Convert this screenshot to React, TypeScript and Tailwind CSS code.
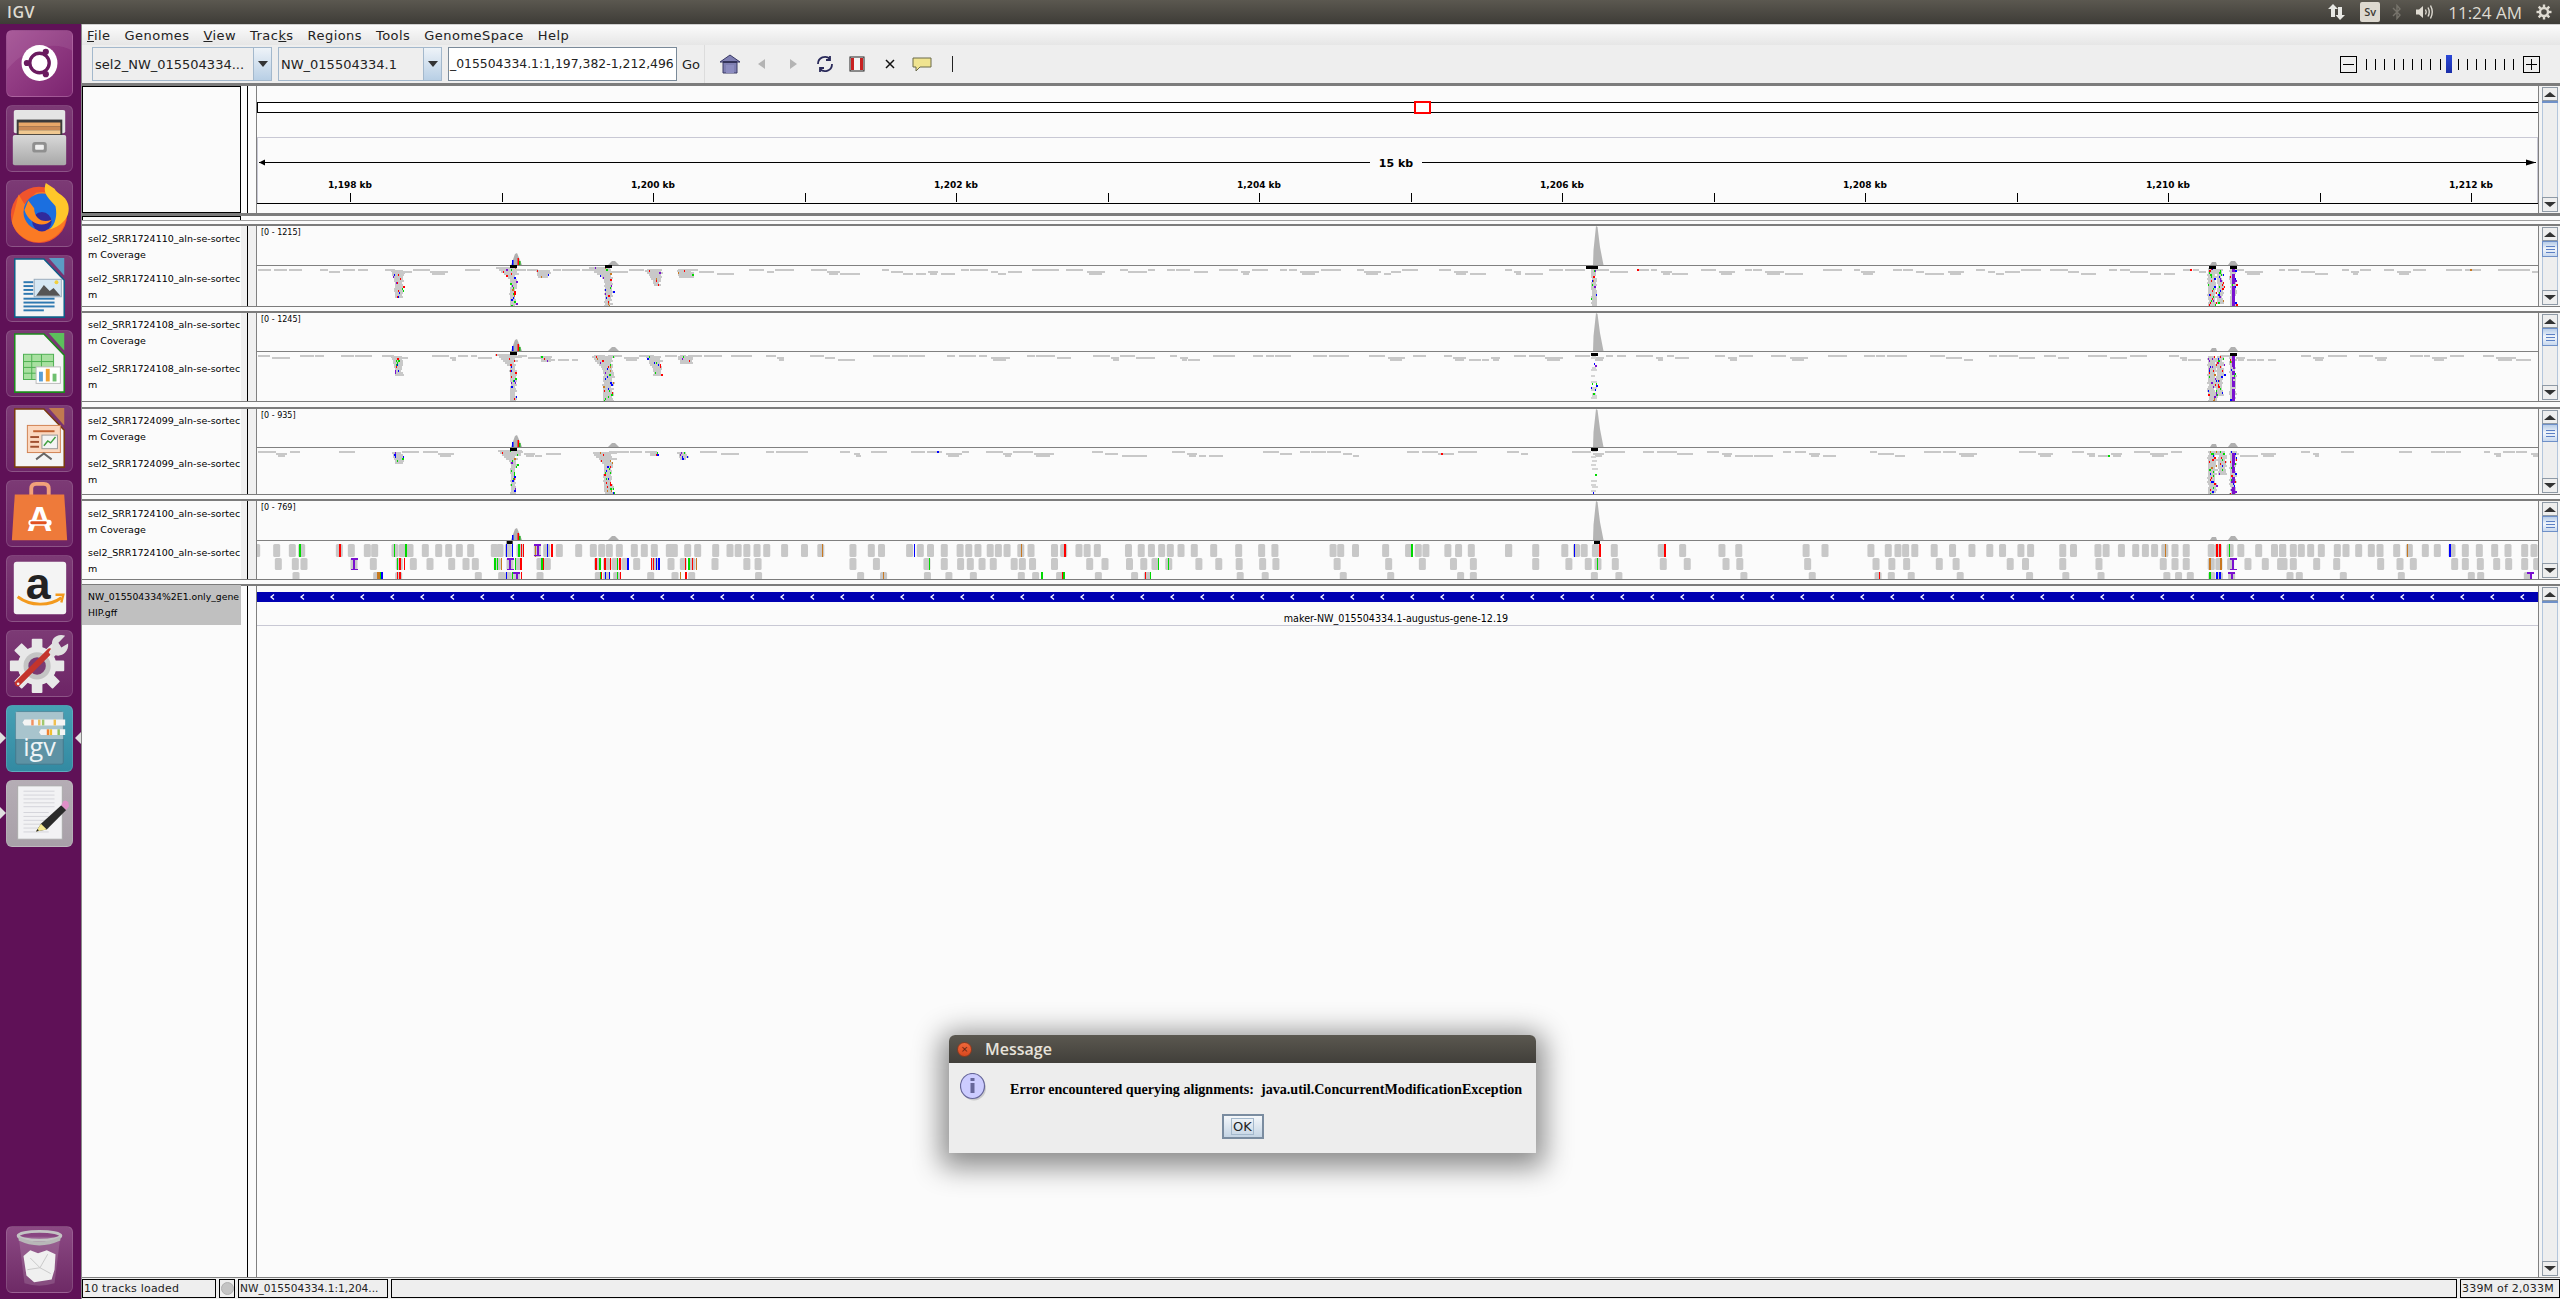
import React from "react";

function mk(seed: number) {
  let a = seed >>> 0;
  return () => {
    a = (a + 0x6d2b79f5) >>> 0;
    let t = a;
    t = Math.imul(t ^ (t >>> 15), t | 1);
    t ^= t + Math.imul(t ^ (t >>> 7), t | 61);
    return ((t ^ (t >>> 14)) >>> 0) / 4294967296;
  };
}
const GREY = "#c8c8c8";
const COLORS = ["#ff0000", "#0000ff", "#00d800", "#c87820", "#7a10d0", "#ff0000", "#0000ff", "#00d800"];

type R = { x: number; y: number; w: number; h: number; c: string };

function scatter(seed: number, y0: number, step: number): R[] {
  const r = mk(seed);
  const out: R[] = [];
  let x = 258;
  while (x < 2530) {
    const groupEnd = x + 10 + r() * 50;
    let row = 0;
    while (x < groupEnd) {
      const w = 6 + r() * 14;
      out.push({ x, y: y0 + row * 2, w, h: 2, c: GREY });
      if (row === 1 && r() < 0.5) out.push({ x: x + 2, y: y0 + 4, w: w * 0.7, h: 2, c: GREY });
      if (r() < 0.02) out.push({ x: x + r() * w, y: y0 + row * 2, w: 2, h: 2, c: COLORS[Math.floor(r() * 8)] });
      x += w + r() * 4;
      row = r() < 0.5 ? Math.min(row + 1, 2) : Math.max(row - 1, 0);
    }
    x += 4 + r() * step;
  }
  return out;
}

function pile(seed: number, cx: number, w: number, y0: number, y1: number, flare: number, opts: { dens?: number; purple?: boolean; sparse?: boolean; mark?: boolean } = {}): R[] {
  const r = mk(seed);
  const out: R[] = [];
  const dens = opts.dens ?? 0.7;
  for (let y = y0; y < y1; y += 2) {
    const t = Math.max(0, 1 - (y - y0) / 12);
    const ww = w * (0.8 + r() * 0.4) + flare * t * (0.6 + r() * 0.5);
    const left = cx - w / 2 - flare * t * 0.7 + (r() - 0.5) * 1.5;
    if (!opts.sparse || r() < 0.45) out.push({ x: left, y, w: ww, h: 2, c: opts.sparse ? "#d4d4d4" : GREY });
    if (r() < dens) {
      out.push({ x: left + r() * ww, y, w: r() < 0.7 ? 1 : 2, h: 2, c: COLORS[Math.floor(r() * 8)] });
      if (r() < 0.25) out.push({ x: left + r() * ww, y, w: 1, h: 2, c: COLORS[Math.floor(r() * 8)] });
    }
    if (opts.purple && r() < 0.85) out.push({ x: cx - 1, y, w: 2.5, h: 2, c: "#7a10d0" });
  }
  if (opts.mark !== false) out.push({ x: cx - 3.5, y: y0 - 2, w: 7, h: 3, c: "#000000" });
  return out;
}

function Rects({ items }: { items: R[] }) {
  return (
    <>
      {items.map((d, i) => (
        <rect key={i} x={d.x} y={d.y} width={d.w} height={d.h} fill={d.c} shapeRendering="crispEdges" />
      ))}
    </>
  );
}

function Peaks({ div, top }: { div: number; top: number }) {
  return (
    <g>
      <polygon points={`1593,${div} 1593.5,${div - 15} 1596,${top} 1597.5,${top + 1} 1600,${div - 18} 1603.5,${div}`} fill="#b4b4b4" />
      <polygon points={`511,${div} 515,${div - 11} 517,${div - 12} 520,${div - 5} 522,${div}`} fill="#b0b0b0" />
      <rect x="512" y={div - 5} width="1.5" height="5" fill="#0000ff" />
      <rect x="517.5" y={div - 7} width="1.5" height="7" fill="#ff0000" />
      <rect x="519" y={div - 4} width="1.5" height="4" fill="#00c000" />
      <polygon points={`608,${div} 612,${div - 4} 615,${div - 4} 619,${div}`} fill="#b0b0b0" />
      <polygon points={`2210,${div} 2212,${div - 3} 2216,${div - 3} 2217,${div}`} fill="#b0b0b0" />
      <polygon points={`2228,${div} 2231,${div - 4} 2235,${div - 4} 2238,${div}`} fill="#b0b0b0" />
    </g>
  );
}

const z10 = (X: number) => 240 + X / 3;
const z11 = (X: number) => 730 + X / 1.96;
const z9 = (X: number) => 1500 + X / 1.96;
const z12 = (X: number) => 2280 + X / 3;

const row1 = [
  ...[50, 110, 157, 185, 298, 334, 382, 404, 465, 487, 510, 556, 596, 626, 658, 692, 763, 780, 805, 840, 892, 920, 958, 1016, 1060, 1085, 1108, 1138, 1183, 1213, 1243, 1288, 1303, 1343, 1373, 1427, 1470].map(z10),
  ...[16, 33, 53, 72, 107, 146, 178, 241, 277, 297, 352, 373, 393, 420, 451, 468, 486, 510, 526, 543, 570, 590, 636, 654, 684, 700, 720, 781, 806, 826, 846, 863, 884, 910, 948, 997, 1042, 1068, 1182, 1197, 1226, 1285, 1330, 1349, 1364, 1407, 1428, 1453, 1526].map(z11),
  ...[17, 70, 127, 150, 165, 187, 224, 316, 358, 435, 468, 600, 637, 727, 761, 780, 795, 813, 851, 887, 925, 960, 985, 1021, 1040, 1103, 1124, 1172, 1188, 1218, 1246, 1265, 1283, 1303, 1323, 1345, 1394, 1408, 1431, 1452, 1487, 1518, 1534].map(z9),
  ...[8, 40, 64, 92, 124, 172, 198, 236, 274, 300, 350, 388, 436, 472, 516, 556, 598, 644, 684, 734, 762].map(z12),
];
const row2 = [
  ...[115, 166, 192, 342, 400, 478, 520, 570, 635, 678, 706, 772, 810, 835, 900, 922, 1073, 1100, 1125, 1155, 1190, 1245, 1293, 1330, 1356, 1425].map(z10),
  ...[33, 55, 241, 287, 386, 420, 452, 471, 494, 516, 557, 573, 593, 636, 705, 735, 783, 811, 833, 860, 919, 958, 998, 1044, 1070, 1190, 1291, 1357, 1418, 1457].map(z11),
  ...[70, 135, 173, 192, 226, 320, 367, 443, 470, 603, 737, 768, 797, 861, 894, 1000, 1030, 1103, 1174, 1300, 1323, 1345, 1394, 1409, 1432, 1466, 1500, 1530].map(z9),
  ...[12, 40, 110, 170, 302, 360, 400, 524, 556, 601, 650, 686, 734, 770].map(z12),
];
const row3 = [
  ...[168, 410, 476, 715, 785, 805, 830, 900, 1075, 1100, 1130, 1232, 1305, 1355].map(z10),
  ...[56, 256, 301, 387, 429, 477, 571, 599, 646, 722, 793, 818, 1000, 1049, 1202, 1295, 1432, 1457].map(z11),
  ...[185, 233, 478, 612, 741, 767, 806, 902, 1038, 1109, 1178, 1307, 1330, 1353, 1395, 1410, 1434].map(z9),
  ...[30, 58, 190, 364, 574, 602, 742].map(z12),
];
const RD = "#ff0000", BL = "#0000ff", GN = "#00d800", OR = "#c87820";
const s1: [number, string][] = [
  [z10(178), GN], [z10(298), RD], [z10(461), GN], [z10(496), GN], [z10(798), BL], [z10(815), BL], [z10(835), GN], [z10(842), RD], [z10(848), RD], [z10(885), OR], [z10(920), BL], [z10(934), RD],
  [z11(180), OR], [z11(360), BL], [z11(570), OR], [z11(655), RD], [z11(1335), GN],
  [z9(145), BL], [z9(195), RD], [z9(322), RD], [z9(1303), OR], [z9(1404), RD], [z9(1410), RD], [z9(1428), GN],
  [z12(381), OR], [z12(508), BL],
];
const s2: [number, string][] = [
  [z10(470), GN], [z10(478), RD], [z10(492), RD], [z10(763), GN], [z10(770), GN], [z10(783), OR], [z10(825), GN], [z10(840), RD], [z10(843), RD], [z10(904), GN], [z10(908), RD], [z10(1066), RD], [z10(1078), GN], [z10(1093), RD], [z10(1110), RD], [z10(1130), GN], [z10(1138), RD], [z10(1162), BL], [z10(1233), RD], [z10(1238), RD], [z10(1248), BL], [z10(1255), BL], [z10(1335), RD], [z10(1345), GN], [z10(1355), RD], [z10(1368), OR],
  [z11(390), GN], [z11(838), GN], [z11(858), GN],
  [z9(190), GN], [z9(1390), OR], [z9(1412), OR],
];
const s3: [number, string][] = [
  [z10(410), OR], [z10(415), OR], [z10(420), GN], [z10(424), BL], [z10(470), RD], [z10(478), RD], [z10(797), BL], [z10(815), GN], [z10(842), RD], [z10(1080), GN], [z10(1083), RD], [z10(1095), BL], [z10(1106), BL], [z10(1130), GN], [z10(1140), RD], [z10(1320), OR], [z10(1336), RD],
  [z11(300), OR], [z11(610), GN], [z11(650), RD], [z11(653), GN], [z11(813), RD], [z11(823), GN],
  [z9(742), RD], [z9(1390), GN], [z9(1404), BL], [z9(1410), BL],
];

function Blocks({ xs, y, h, stripes }: { xs: number[]; y: number; h: number; stripes: [number, string][] }) {
  return (
    <g>
      {xs.map((x, i) => (
        <rect key={i} x={x - 3.5} y={y} width={7} height={h} rx={1.5} fill={GREY} />
      ))}
      {stripes.map(([x, c], i) => (
        <rect key={i} x={x} y={y} width={1.4} height={h} fill={c} shapeRendering="crispEdges" />
      ))}
    </g>
  );
}
function PurpleI({ x, y, h, top }: { x: number; y: number; h: number; top?: boolean }) {
  return (
    <g fill="#7a10d0" shapeRendering="crispEdges">
      <rect x={x - 1} y={y} width={2} height={h} />
      <rect x={x - 3.5} y={y} width={7} height={1.5} />
      {!top && <rect x={x - 3.5} y={y + h - 1.5} width={7} height={1.5} />}
    </g>
  );
}

const T1 = [
  ...scatter(11, 269, 16),
  ...pile(1, 399, 8, 270, 298, 6, { mark: false }),
  ...pile(2, 513, 6, 267, 306, 20, { dens: 0.85 }),
  ...pile(3, 608, 7, 267, 306, 22, { dens: 0.8 }),
  ...pile(4, 657, 6, 270, 285, 12, { mark: false }),
  ...pile(5, 544, 10, 270, 278, 4, { mark: false }),
  ...pile(6, 686, 10, 270, 278, 6, { mark: false }),
  ...pile(7, 1594, 5, 268, 306, 0, { dens: 0.4 }),
  { x: 1586, y: 266, w: 6, h: 3, c: "#000" },
  ...pile(8, 2212, 8, 268, 306, 0, { dens: 0.9, mark: true }),
  ...pile(9, 2220, 6, 270, 304, 0, { dens: 0.9, mark: false }),
  ...pile(10, 2233, 6, 268, 306, 0, { dens: 0.7, purple: true }),
];
const T2 = [
  ...scatter(21, 355, 20),
  ...pile(12, 399, 8, 356, 376, 6, { mark: false }),
  ...pile(13, 513, 6, 354, 402, 20, { dens: 0.7 }),
  ...pile(14, 608, 10, 356, 402, 16, { dens: 0.85, mark: false }),
  ...pile(15, 657, 8, 356, 376, 10, { mark: false }),
  ...pile(16, 687, 10, 356, 363, 6, { mark: false }),
  ...pile(17, 547, 8, 356, 362, 4, { mark: false }),
  ...pile(18, 1594, 5, 355, 400, 0, { dens: 0.3, sparse: true }),
  ...pile(19, 2212, 8, 356, 402, 0, { dens: 0.9, mark: false }),
  ...pile(20, 2220, 7, 356, 396, 0, { dens: 0.9, mark: false }),
  ...pile(22, 2233, 6, 355, 402, 0, { dens: 0.6, purple: true }),
];
const T3 = [
  ...scatter(31, 451, 45),
  ...pile(23, 399, 7, 452, 463, 5, { mark: false }),
  ...pile(24, 513, 5, 450, 495, 18, { dens: 0.75 }),
  ...pile(25, 608, 8, 452, 495, 16, { dens: 0.8, mark: false }),
  ...pile(26, 655, 4, 452, 456, 4, { mark: false }),
  ...pile(27, 684, 6, 452, 460, 4, { mark: false }),
  ...pile(33, 1594, 5, 450, 495, 0, { dens: 0.2, sparse: true }),
  ...pile(28, 2212, 8, 451, 495, 0, { dens: 0.9, mark: false }),
  ...pile(29, 2222, 8, 451, 475, 0, { dens: 0.8, mark: false }),
  ...pile(30, 2233, 6, 451, 495, 0, { dens: 0.9, purple: true, mark: false }),
];

const Name = ({ a, b }: { a: string; b: string }) => (
  <div className="flex-1 min-w-0 flex flex-col justify-center">
    <div className="whitespace-nowrap leading-[16px]">{a}</div>
    <div className="whitespace-nowrap leading-[16px]">{b}</div>
  </div>
);

function Scroll({ thumb, lines = true }: { thumb: number; lines?: boolean }) {
  return (
    <div className="w-[22px] shrink-0 border-l border-[#808080] bg-[#f4f4f4] flex flex-col pl-[3px] pr-[2px] pt-[1px] pb-[1px]">
      <div className="h-[14px] shrink-0 bg-[#eeeeee] border border-[#8f9aa6] flex items-center justify-center">
        <div className="w-0 h-0 border-x-[6px] border-x-transparent border-b-[5px] border-b-[#333333]" />
      </div>
      <div className="shrink-0 bg-gradient-to-b from-[#b8cde8] via-[#f2f6fb] to-[#c8d8ee] border border-[#6f90c8] flex flex-col items-center justify-center gap-[2px]" style={{ height: thumb }}>
        {lines && (
          <>
            <div className="w-[9px] h-px bg-[#5c80c4]" />
            <div className="w-[9px] h-px bg-[#5c80c4]" />
            <div className="w-[9px] h-px bg-[#5c80c4]" />
          </>
        )}
      </div>
      <div className="flex-1 bg-[#eeeeee] border-x border-[#b4c6dc]" />
      <div className="h-[15px] shrink-0 bg-[#eeeeee] border border-[#8f9aa6] flex items-center justify-center">
        <div className="w-0 h-0 border-x-[6px] border-x-transparent border-t-[5px] border-t-[#333333]" />
      </div>
    </div>
  );
}

function Track({ n, range, top, h, div, items, extra, mt }: { n: string; range: string; top: number; h: number; div: number; items?: R[]; extra?: React.ReactNode; mt: string }) {
  return (
    <div className={`flex shrink-0 border-t-2 border-b border-[#7c7c7c] bg-[#fbfbfb] ${mt}`} style={{ height: h }}>
      <div className="w-[159px] shrink-0 pl-[6px] text-[9.5px] text-black flex flex-col bg-[#fbfbfb]">
        <div className="flex" style={{ height: div - top }}>
          <Name a={`sel2_SRR${n}_aln-se-sortec`} b="m Coverage" />
        </div>
        <div className="flex flex-1 min-h-0">
          <Name a={`sel2_SRR${n}_aln-se-sortec`} b="m" />
        </div>
      </div>
      <div className="w-[6px] shrink-0 bg-[#f0f0f0]" />
      <div className="w-px shrink-0 bg-black" />
      <div className="w-[8px] shrink-0 bg-[#f0f0f0]" />
      <div className="w-px shrink-0 bg-[#808080]" />
      <div className="relative w-[2281px] shrink-0">
        <svg className="block" width={2281} height={h - 3} viewBox={`257 ${top + 2} 2281 ${h - 3}`}>
          <Peaks div={div} top={top + 2} />
          <rect x="257" y={div} width="2281" height="1" fill="#808080" />
          {items && <Rects items={items} />}
          {extra}
        </svg>
        <div className="absolute left-[4px] top-[2px] text-[8px] leading-[10px] text-black font-['DejaVu_Sans']">{range}</div>
      </div>
      <Scroll thumb={h > 85 ? 18 : 16} />
    </div>
  );
}

const T4extra = (
  <g>
    <Blocks xs={row1} y={544} h={13} stripes={s1} />
    <Blocks xs={row2} y={558} h={12} stripes={s2} />
    <Blocks xs={row3} y={572} h={8} stripes={s3} />
    <PurpleI x={z10(342)} y={558} h={12} />
    <PurpleI x={z10(810)} y={558} h={12} />
    <PurpleI x={z9(1437)} y={558} h={12} />
    <PurpleI x={z10(893)} y={544} h={12} />
    <PurpleI x={z10(830)} y={572} h={8} top />
    <PurpleI x={z9(1434)} y={572} h={8} top />
    <PurpleI x={z12(752)} y={572} h={8} top />
    <rect x={z10(800)} y={541} width={6} height={3} fill="#000" />
    <rect x={1594} y={541} width={6} height={3} fill="#000" />
  </g>
);

function Ruler() {
  const ticks = Array.from({ length: 15 }, (_, i) => 350 + i * 151.5);
  const labels = ["1,198 kb", "1,200 kb", "1,202 kb", "1,204 kb", "1,206 kb", "1,208 kb", "1,210 kb", "1,212 kb"];
  return (
    <svg className="block" width={2281} height={127} viewBox="257 86 2281 127">
      <rect x="257" y="86" width="2281" height="127" fill="#fbfbfb" />
      <rect x="257.5" y="102.5" width="2281" height="10" fill="#ffffff" stroke="#000" />
      <rect x="1415" y="102" width="15" height="11" fill="none" stroke="#ff0000" strokeWidth="2" />
      <rect x="257.5" y="137.5" width="2280" height="66" fill="none" stroke="#c8c8d4" />
      <rect x="259" y="162" width="2277" height="1" fill="#000" />
      <polygon points="259,162.5 265,159.5 265,165.5" fill="#000" />
      <polygon points="2536,162.5 2526,159.5 2526,165.5" fill="#000" />
      <rect x="1370" y="155" width="52" height="15" fill="#fbfbfb" />
      <text x="1396" y="167" textAnchor="middle" fontFamily="'DejaVu Sans', sans-serif" fontWeight="700" fontSize="11" fill="#000">15 kb</text>
      {ticks.map((x, i) => (
        <rect key={i} x={Math.round(x)} y="193" width="1" height="9" fill="#000" />
      ))}
      {labels.map((l, i) => (
        <text key={i} x={350 + i * 303} y="188" textAnchor="middle" fontFamily="'DejaVu Sans', sans-serif" fontWeight="700" fontSize="9" fill="#000">{l}</text>
      ))}
      <rect x="257" y="203" width="2281" height="1" fill="#000" />
    </svg>
  );
}

function Tile({ children, cls }: { children: React.ReactNode; cls?: string }) {
  return (
    <div className={`w-[67px] h-[67px] shrink-0 rounded-[6px] border border-[#ffffff22] flex items-center justify-center overflow-hidden ${cls ?? "bg-gradient-to-b from-[#7c3a75] to-[#6d2466]"}`}>
      {children}
    </div>
  );
}

const Svg = ({ children }: { children: React.ReactNode }) => (
  <svg width="67" height="67" viewBox="0 0 67 67">{children}</svg>
);

function DocIcon({ edge, corner, children }: { edge: string; corner: string; children: React.ReactNode }) {
  return (
    <Svg>
      <path d="M8 3 H38 L59 25 V63 H8 Z" fill="#f4f4f4" stroke={edge} strokeWidth="1.6" />
      <path d="M43 2 H59 V20 Z" fill={corner} />
      {children}
    </Svg>
  );
}

function Launcher() {
  return (
    <div className="w-[82px] shrink-0 h-full bg-[#5f1157] border-r border-[#8a8a8a] flex flex-col items-center pt-[6px] pb-[6px] gap-[8px] pr-[2px] relative">
      <Tile cls="bg-gradient-to-br from-[#a24d92] to-[#7c2470]">
        <Svg>
          <path d="M0 40 C 20 15, 50 10, 67 20 V 0 H0 Z" fill="#ffffff14" />
          <circle cx="33.5" cy="33" r="18.5" fill="#fff" />
          <circle cx="33.5" cy="33" r="10" fill="none" stroke="#6a1a5f" strokeWidth="3.5" />
          <circle cx="40" cy="21.5" r="3.2" fill="#6a1a5f" />
          <circle cx="40" cy="44.5" r="3.2" fill="#6a1a5f" />
          <circle cx="20.5" cy="33" r="3.2" fill="#6a1a5f" />
        </Svg>
      </Tile>
      <Tile>
        <Svg>
          <rect x="7" y="4" width="53" height="24" rx="2" fill="#e4e4e4" />
          <rect x="10" y="14" width="47" height="16" fill="#3a3a3a" />
          <rect x="12" y="17" width="43" height="4" fill="#e8a868" />
          <rect x="12" y="21" width="43" height="4" fill="#c98a55" />
          <rect x="12" y="25" width="43" height="4" fill="#f0c890" />
          <rect x="6" y="30" width="55" height="31" rx="2" fill="url(#cab)" />
          <defs>
            <linearGradient id="cab" x1="0" y1="0" x2="0" y2="1">
              <stop offset="0" stopColor="#d8d8d8" />
              <stop offset="1" stopColor="#a8a8a8" />
            </linearGradient>
          </defs>
          <rect x="26" y="37" width="15" height="11" rx="3" fill="#8f8f8f" />
          <rect x="29" y="40" width="9" height="5" rx="1" fill="#f0f0f0" />
        </Svg>
      </Tile>
      <Tile>
        <Svg>
          <circle cx="33" cy="35" r="29" fill="#f0542c" />
          <path d="M12 14 L18 24 L30 12 C 50 8 60 22 61 34 C 62 50 48 63 32 63 C 20 63 8 54 5 42 Z" fill="#fb7a24" />
          <circle cx="36" cy="32" r="19" fill="#1b6fe0" />
          <circle cx="36" cy="42" r="10" fill="#302a9c" />
          <path d="M18 30 C 22 44 38 50 46 40 C 36 44 28 38 28 28 L 22 20 Z" fill="#ff8a20" />
          <path d="M40 2 C 36 14 44 18 50 26 C 52 36 50 44 44 50 C 58 46 66 36 63 24 C 60 14 52 14 49 8 Z" fill="#ffc72a" />
        </Svg>
      </Tile>
      <Tile>
        <DocIcon edge="#0f5e88" corner="#5b9cc4">
          <rect x="28" y="24" width="28" height="18" fill="#d6e8f4" stroke="#9ab" />
          <path d="M30 41 L38 30 L44 36 L48 33 L55 41 Z" fill="#555" />
          <circle cx="51" cy="27" r="2" fill="#f0d040" />
          {[26, 30, 34, 38].map((y) => <rect key={y} x="17" y={y} width="10" height="2" fill="#2e78b0" />)}
          {[43, 47, 51].map((y) => <rect key={y} x="17" y={y} width="32" height="2" fill="#2e78b0" />)}
          <rect x="17" y="55" width="21" height="2" fill="#2e78b0" />
        </DocIcon>
      </Tile>
      <Tile>
        <DocIcon edge="#1c8a1c" corner="#5cc05c">
          <rect x="17" y="24" width="31" height="26" fill="#a8e0a0" stroke="#4caf50" />
          {[31, 37, 43].map((y) => <rect key={y} x="17" y={y} width="31" height="1" fill="#4caf50" />)}
          {[25, 35].map((x) => <rect key={x} x={x} y="24" width="1" height="26" fill="#4caf50" />)}
          <rect x="30" y="37" width="25" height="17" fill="#fff" stroke="#bbb" />
          <rect x="33" y="42" width="4" height="10" fill="#5a9fd4" />
          <rect x="40" y="39" width="4" height="13" fill="#f0a030" />
          <rect x="47" y="44" width="4" height="8" fill="#70c070" />
        </DocIcon>
      </Tile>
      <Tile>
        <DocIcon edge="#7a3a10" corner="#c07a50">
          <rect x="21" y="20" width="34" height="28" fill="#fbd8c0" stroke="#d08050" />
          <rect x="27" y="25" width="22" height="2" fill="#c06030" />
          {[31, 36, 41].map((y) => <rect key={y} x="24" y={y} width="9" height="2" fill="#a05030" />)}
          <rect x="36" y="30" width="16" height="14" fill="#f4f4f4" stroke="#999" />
          <path d="M38 41 L42 36 L45 38 L50 32" stroke="#40a040" strokeWidth="1.5" fill="none" />
          <path d="M30 55 L38 49 L46 55" stroke="#666" strokeWidth="2" fill="none" />
        </DocIcon>
      </Tile>
      <Tile>
        <Svg>
          <path d="M25 20 V8 Q25 3 30 3 H38 Q43 3 43 8 V20" fill="none" stroke="#f2a27a" strokeWidth="4" />
          <path d="M8 14 H59 L62 61 H5 Z" fill="#ee7a3a" />
          <text x="33.5" y="52" textAnchor="middle" fontFamily="'Liberation Sans', sans-serif" fontWeight="700" fontSize="36" fill="#fff">A</text>
          <rect x="22" y="40" width="24" height="6" rx="3" fill="#fff" />
          <rect x="24" y="41.5" width="17" height="3" rx="1.5" fill="#e05020" />
        </Svg>
      </Tile>
      <Tile>
        <Svg>
          <rect x="7" y="6" width="54" height="54" rx="3" fill="#f4f4f4" />
          <text x="32" y="44" textAnchor="middle" fontFamily="'Liberation Sans', sans-serif" fontWeight="700" fontSize="46" fill="#222">a</text>
          <path d="M11 42 C 24 52 44 52 56 43" fill="none" stroke="#f39a1e" strokeWidth="3" />
          <path d="M50 40 L58 40 L56 48" fill="none" stroke="#f39a1e" strokeWidth="2.5" />
        </Svg>
      </Tile>
      <Tile>
        <Svg>
          <g fill="#e8e8e8">
            <circle cx="31" cy="36" r="20" />
            {[0, 45, 90, 135, 180, 225, 270, 315].map((a) => (
              <rect key={a} x="25.5" y="8" width="11" height="11" rx="1" transform={`rotate(${a} 31 36)`} />
            ))}
          </g>
          <circle cx="31" cy="36" r="14" fill="#c4c4c4" />
          <circle cx="31" cy="36" r="9" fill="#7a3a72" />
          <path d="M11 54 L44 21" stroke="#c4342c" strokeWidth="6" strokeLinecap="round" />
          <path d="M43 22 L47 16 C 44 8 52 2 60 5 L53 12 L56 17 L63 13 C 64 22 56 27 50 25 L47 28 Z" fill="#e0e0e0" />
          <circle cx="11.5" cy="54.5" r="1.4" fill="#eee" />
        </Svg>
      </Tile>
      <div className="relative">
        <Tile cls="bg-gradient-to-b from-[#46a0b4] to-[#338aa2]">
          <Svg>
            <rect x="9" y="6" width="49" height="54" rx="2" fill="#5d92a4" stroke="#44798c" />
            <rect x="9" y="6" width="49" height="28" fill="#dbe6ea" opacity="0.6" />
            <path d="M18 14 H60 V20 H18 L16 17 Z" fill="#f4f4f4" />
            {[[25, "#f09060"], [32, "#e8c060"], [36, "#a0c870"], [48, "#f0c050"]].map(([x, c]) => (
              <rect key={x as number} x={x as number} y="14" width="2.5" height="6" fill={c as string} />
            ))}
            <path d="M35 24 H60 V30 H35 L33 27 Z" fill="#f4f4f4" />
            {[[41, "#f08030"], [44, "#f0c030"], [52, "#90c060"]].map(([x, c]) => (
              <rect key={x as number} x={x as number} y="24" width="2.5" height="6" fill={c as string} />
            ))}
            <text x="33.5" y="52" textAnchor="middle" fontFamily="'Open Sans', sans-serif" fontSize="26" fill="#eef4f6">igv</text>
          </Svg>
        </Tile>
        <div className="absolute left-[-6px] top-[27px] w-0 h-0 border-y-[6px] border-y-transparent border-l-[6px] border-l-[#e0e0e0]" />
        <div className="absolute right-[-8px] top-[27px] w-0 h-0 border-y-[6px] border-y-transparent border-r-[6px] border-r-[#e0e0e0]" />
      </div>
      <div className="relative">
        <Tile cls="bg-gradient-to-b from-[#b5adb5] to-[#a8a0a8]">
          <Svg>
            <rect x="11" y="5" width="46" height="55" fill="#f2f2f4" stroke="#aaa" />
            {[10, 14, 18, 22, 26, 32, 36, 40, 44, 48, 52].map((y) => (
              <rect key={y} x="17" y={y} width={y % 4 ? 32 : 26} height="1" fill="#d4d4da" />
            ))}
            <path d="M30 52 L35 44 L56 25 L61 30 L41 50 Z" fill="#2a2a2a" />
            <path d="M56 25 L58 21 Q61 19 63 22 L64 26 L61 30 Z" fill="#e090c8" />
            <path d="M30 52 L35 44 L41 50 Z" fill="#f4e890" />
            <path d="M30 52 L31.5 49.5 L33 51 Z" fill="#222" />
          </Svg>
        </Tile>
        <div className="absolute left-[-6px] top-[27px] w-0 h-0 border-y-[6px] border-y-transparent border-l-[6px] border-l-[#e0e0e0]" />
      </div>
      <div className="mt-auto">
        <Tile cls="bg-gradient-to-b from-[#8c4a84] to-[#6e2a66]">
          <Svg>
            <path d="M12 10 L18 58 Q33 63 49 58 L55 10 Z" fill="#ffffff26" />
            <ellipse cx="33.5" cy="9" rx="22" ry="4.5" fill="none" stroke="#c4c4c4" strokeWidth="3" />
            <path d="M12 10 Q33 20 55 10 L55 14 Q33 24 12 14 Z" fill="#b8b8b8" />
            <path d="M17 30 L24 24 L32 27 L41 24 L50 28 L49 44 L46 54 L28 57 L20 50 Z" fill="#f0f0f0" />
            <path d="M24 32 L34 42 M42 28 L34 42 M21 44 L34 42 M45 48 L34 42" stroke="#c8c8c8" strokeWidth="1" />
          </Svg>
        </Tile>
      </div>
    </div>
  );
}

function TopBar() {
  return (
    <div className="h-6 shrink-0 bg-gradient-to-b from-[#5b5850] to-[#3e3c37] flex items-center pl-[7px] pr-[8px] text-[#dfdbd2]">
      <span className="font-['Open_Sans'] font-semibold text-[16px] leading-none tracking-[0.5px]">IGV</span>
      <div className="ml-auto flex items-center">
        <svg width="18" height="18" viewBox="0 0 18 18" className="mr-[14px]" fill="#e8e8e4">
          <path d="M5 1 L10 6 H7 V14 H3 V6 H0 Z" />
          <path d="M12 17 L7.5 12 H10 V4 H14 V12 H17 Z" />
        </svg>
        <div className="w-[20px] h-[20px] rounded-[2px] bg-[#ddd9d0] text-[#3c3a35] text-[11px] font-['Open_Sans'] font-semibold flex items-center justify-center mr-[12px]">Sv</div>
        <svg width="10" height="16" viewBox="0 0 10 16" className="mr-[13px]" fill="none" stroke="#77746c" strokeWidth="1.4">
          <path d="M1 4 L8 11 L5 14.5 V1.5 L8 5 L1 12" />
        </svg>
        <svg width="20" height="16" viewBox="0 0 20 16" className="mr-[13px]" fill="none" stroke="#dfdbd2" strokeWidth="1.4">
          <path d="M1 5.5 H4 L8 2 V14 L4 10.5 H1 Z" fill="#dfdbd2" stroke="none" />
          <path d="M10.5 5.5 Q12 8 10.5 10.5" />
          <path d="M13 3.5 Q15.5 8 13 12.5" />
          <path d="M15.5 1.5 Q19 8 15.5 14.5" />
        </svg>
        <span className="font-['Open_Sans'] text-[17px] leading-none mr-[14px]">11:24 AM</span>
        <svg width="16" height="16" viewBox="0 0 16 16" fill="none" stroke="#dfdbd2">
          <circle cx="8" cy="8" r="4" strokeWidth="2.4" />
          {[0, 45, 90, 135, 180, 225, 270, 315].map((a) => (
            <rect key={a} x="6.8" y="0.5" width="2.4" height="2.8" fill="#dfdbd2" stroke="none" transform={`rotate(${a} 8 8)`} />
          ))}
        </svg>
      </div>
    </div>
  );
}

function MenuBar() {
  return (
    <div className="h-[21px] shrink-0 bg-gradient-to-b from-[#fbfbfb] to-[#e6e6e6] border-t border-[#cfcfcf] flex items-center pl-[5px] gap-[14px] text-[13px] text-[#222222] leading-none tracking-[0.45px]">
      <span><u>F</u>ile</span>
      <span>Genomes</span>
      <span><u>V</u>iew</span>
      <span>Trac<u>k</u>s</span>
      <span>Regions</span>
      <span>Tools</span>
      <span>GenomeSpace</span>
      <span>Help</span>
    </div>
  );
}

function Combo({ w, text }: { w: string; text: string }) {
  return (
    <div className={`${w} h-[34px] shrink-0 flex border border-[#a3b8cc]`}>
      <div className="flex-1 bg-[#eeeeee] flex items-center pl-[2px] whitespace-nowrap">{text}</div>
      <div className="w-[18px] shrink-0 border-l border-[#a3b8cc] bg-gradient-to-b from-[#eef3f8] to-[#b8cfe5] flex items-center justify-center">
        <div className="w-0 h-0 border-x-[5px] border-x-transparent border-t-[6px] border-t-[#333333]" />
      </div>
    </div>
  );
}

function Toolbar() {
  return (
    <div className="h-[38px] shrink-0 bg-[#eeeeee] flex items-center pl-[10px] text-[13px] text-[#222222] leading-none">
      <Combo w="w-[180px]" text="sel2_NW_015504334..." />
      <div className="w-[6px] shrink-0" />
      <Combo w="w-[164px]" text="NW_015504334.1" />
      <div className="w-[6px] shrink-0" />
      <div className="w-[229px] h-[34px] shrink-0 bg-white border border-[#7a8a99] flex items-center pl-[1px] whitespace-nowrap text-[12.4px]">_015504334.1:1,197,382-1,212,496</div>
      <span className="ml-[5px] w-[20px]">Go</span>
      <div className="w-px h-[38px] bg-[#dcdcdc] ml-[2px]" />
      <svg width="22" height="20" viewBox="0 0 22 20" className="ml-[14px]">
        <path d="M11 1 L21 8 H18 V19 H4 V8 H1 Z" fill="#7f7fb2" stroke="#3a3a66" />
        <rect x="4" y="7" width="14" height="2" fill="#33335a" />
        <rect x="7" y="11" width="8" height="8" fill="#8c8cc0" />
      </svg>
      <svg width="10" height="12" viewBox="0 0 10 12" className="ml-[15px]"><path d="M9 1 L2 6 L9 11 Z" fill="#b4b4b4" /></svg>
      <svg width="10" height="12" viewBox="0 0 10 12" className="ml-[23px]"><path d="M1 1 L8 6 L1 11 Z" fill="#b4b4b4" /></svg>
      <svg width="20" height="18" viewBox="0 0 20 18" className="ml-[16px]" fill="none" stroke="#2a2a5a" strokeWidth="1.8">
        <path d="M3 9 A7 7 0 0 1 15 4" />
        <path d="M17 9 A7 7 0 0 1 5 14" />
        <path d="M15 1 V5 H11" />
        <path d="M5 17 V13 H9" />
      </svg>
      <svg width="16" height="16" viewBox="0 0 16 16" className="ml-[14px]">
        <rect x="1" y="1" width="14" height="14" fill="#f4f4f4" stroke="#222" />
        <rect x="2" y="2" width="3" height="12" fill="#c82020" />
        <rect x="11" y="2" width="3" height="12" fill="#c82020" />
      </svg>
      <svg width="14" height="14" viewBox="0 0 14 14" className="ml-[18px]" stroke="#111" strokeWidth="1.5" fill="none">
        <path d="M3 3 L11 11 M11 3 L3 11" />
      </svg>
      <svg width="20" height="16" viewBox="0 0 20 16" className="ml-[15px]">
        <path d="M1 2 H19 V11 H8 L4 15 V11 H1 Z" fill="#f0e490" stroke="#6a6a4a" />
      </svg>
      <div className="ml-[20px] w-px h-[16px] bg-[#222222]" />
      <div className="ml-auto flex items-center mr-[20px]">
        <div className="w-[17px] h-[17px] border border-black bg-[#eeeeee] flex items-center justify-center"><div className="w-[11px] h-px bg-black" /></div>
        <div className="ml-[9px] flex items-center gap-[8.2px]">
          {Array.from({ length: 17 }, (_, i) =>
            i === 9 ? (
              <div key={i} className="w-[6px] h-[18px] -mx-[2.5px] bg-gradient-to-b from-[#2a48d8] to-[#1a2ea8]" />
            ) : (
              <div key={i} className="w-px h-[11px] bg-black" />
            )
          )}
        </div>
        <div className="ml-[9px] w-[17px] h-[17px] border border-black bg-[#eeeeee] relative">
          <div className="absolute left-[2px] top-[7px] w-[11px] h-px bg-black" />
          <div className="absolute left-[7px] top-[2px] w-px h-[11px] bg-black" />
        </div>
      </div>
    </div>
  );
}

function Dialog() {
  return (
    <div className="absolute left-[949px] top-[1035px] w-[587px] h-[118px] flex flex-col rounded-t-[6px] bg-[#ededed] shadow-[0_6px_28px_8px_rgba(0,0,0,0.45)]">
      <div className="h-[28px] shrink-0 rounded-t-[6px] bg-gradient-to-b from-[#5b5850] to-[#413f3a] flex items-center pl-[8px]">
        <div className="w-[15px] h-[15px] rounded-full bg-gradient-to-b from-[#f0683a] to-[#d8481e] border border-[#8a3a20] flex items-center justify-center text-[9px] leading-none text-[#5a2010]">×</div>
        <span className="ml-[13px] font-['Open_Sans'] font-semibold text-[16px] leading-none text-[#e6e2da]">Message</span>
      </div>
      <div className="flex items-start pl-[11px] pt-[10px]">
        <svg width="27" height="28" viewBox="0 0 27 28" className="shrink-0">
          <ellipse cx="14" cy="15" rx="12" ry="12.5" fill="#999" opacity="0.4" />
          <ellipse cx="12.5" cy="13" rx="12" ry="12.5" fill="#ccccff" stroke="#666699" strokeWidth="1.2" />
          <rect x="10.5" y="5" width="4" height="3" fill="#666699" />
          <rect x="10.5" y="10" width="4" height="10" fill="#666699" />
        </svg>
        <div className="ml-[23px] pt-[9px] font-['Liberation_Serif'] font-bold text-[14.1px] leading-none text-black whitespace-pre">Error encountered querying alignments:  java.util.ConcurrentModificationException</div>
      </div>
      <div className="flex justify-center mt-[13px]">
        <div className="w-[42px] h-[25px] border-2 border-[#7a8ca0] bg-gradient-to-b from-[#f4f7fa] to-[#c4d4e4] flex items-center justify-center">
          <span className="border border-[#a3b8cc] px-px text-[13px] leading-[15px] text-[#222222]">OK</span>
        </div>
      </div>
    </div>
  );
}

function Status() {
  const box = "h-[19px] border border-black bg-[#eeeeee] flex items-center pl-[1px] whitespace-nowrap";
  return (
    <div className="h-[22px] shrink-0 border-t border-[#808080] bg-[#eeeeee] flex items-center text-[11px] text-[#222222] tracking-[0.2px] leading-none">
      <div className={`${box} w-[134px]`}>10 tracks loaded</div>
      <div className={`${box} w-[16px] ml-[3px] justify-center`}>
        <div className="w-[13px] h-[13px] rounded-full bg-[#c4c4c4] border border-[#b0b0b0] shrink-0" />
      </div>
      <div className={`${box} w-[150px] ml-[3px] text-[10.6px] tracking-normal`}>NW_015504334.1:1,204...</div>
      <div className={`${box} w-[2066px] ml-[3px]`} />
      <div className={`${box} w-[100px] ml-[3px] flex-1`}>339M of 2,033M</div>
    </div>
  );
}

export default function App() {
  const arrows = Array.from({ length: 76 }, (_, i) => 272 + i * 30);
  return (
    <div className="relative w-[2560px] h-[1299px] overflow-hidden flex flex-col bg-[#fbfbfb] font-['DejaVu_Sans',sans-serif]">
      <TopBar />
      <div className="flex flex-1 min-h-0">
        <Launcher />
        <div className="flex-1 min-w-0 flex flex-col">
          <MenuBar />
          <Toolbar />
          <div className="h-[3px] shrink-0 bg-[#7c7c7c]" />
          <div className="flex h-[127px] shrink-0 bg-[#fbfbfb]">
            <div className="w-[159px] shrink-0 bg-[#fbfbfb] border border-black" />
            <div className="w-[6px] shrink-0 bg-[#fbfbfb]" />
            <div className="w-px shrink-0 bg-black" />
            <div className="w-[8px] shrink-0 bg-[#fbfbfb]" />
            <div className="w-px shrink-0 bg-[#808080]" />
            <div className="w-[2281px] shrink-0"><Ruler /></div>
            <Scroll thumb={0} lines={false} />
          </div>
          <div className="h-[3px] shrink-0 bg-[#7c7c7c]" />
          <div className="h-[4px] shrink-0 flex"><div className="w-[159px] border-x border-t border-black" /></div>
          <div className="h-px shrink-0 bg-[#a0a0a0]" />
          <Track n="1724110" range="[0 - 1215]" top={224} h={83} div={265} items={T1} mt="mt-[3px]" />
          <Track n="1724108" range="[0 - 1245]" top={311} h={91} div={351} items={T2} mt="mt-[4px]" />
          <Track n="1724099" range="[0 - 935]" top={407} h={88} div={447} items={T3} mt="mt-[5px]" />
          <Track n="1724100" range="[0 - 769]" top={499} h={81} div={540} extra={T4extra} mt="mt-[4px]" />
          <div className="flex flex-1 min-h-0 mt-[4px] border-t-2 border-[#7c7c7c]">
            <div className="w-[159px] shrink-0 flex flex-col">
              <div className="h-[40px] flex bg-[#c0c0c0] pl-[6px] text-[9.3px] text-black mt-[-1px]">
                <Name a="NW_015504334%2E1.only_gene" b="HIP.gff" />
              </div>
            </div>
            <div className="w-[6px] shrink-0 bg-[#fbfbfb]" />
            <div className="w-px shrink-0 bg-black" />
            <div className="w-[8px] shrink-0 bg-[#fbfbfb]" />
            <div className="w-px shrink-0 bg-[#808080]" />
            <div className="w-[2281px] shrink-0">
              <svg className="block" width={2281} height={60} viewBox="257 586 2281 60">
                <rect x="257" y="592" width="2281" height="10" fill="#0000b2" />
                {arrows.map((x) => (
                  <path key={x} d={`M${x + 2} 594.5 L${x - 1} 597 L${x + 2} 599.5`} stroke="#ffffff" strokeWidth="1.3" fill="none" />
                ))}
                <text x="1396" y="622" textAnchor="middle" fontFamily="'DejaVu Sans', sans-serif" fontSize="9.6" fill="#000">maker-NW_015504334.1-augustus-gene-12.19</text>
                <rect x="257" y="625" width="2281" height="1" fill="#c8c8d4" />
              </svg>
            </div>
            <Scroll thumb={0} lines={false} />
          </div>
          <Status />
        </div>
      </div>
      <Dialog />
    </div>
  );
}
